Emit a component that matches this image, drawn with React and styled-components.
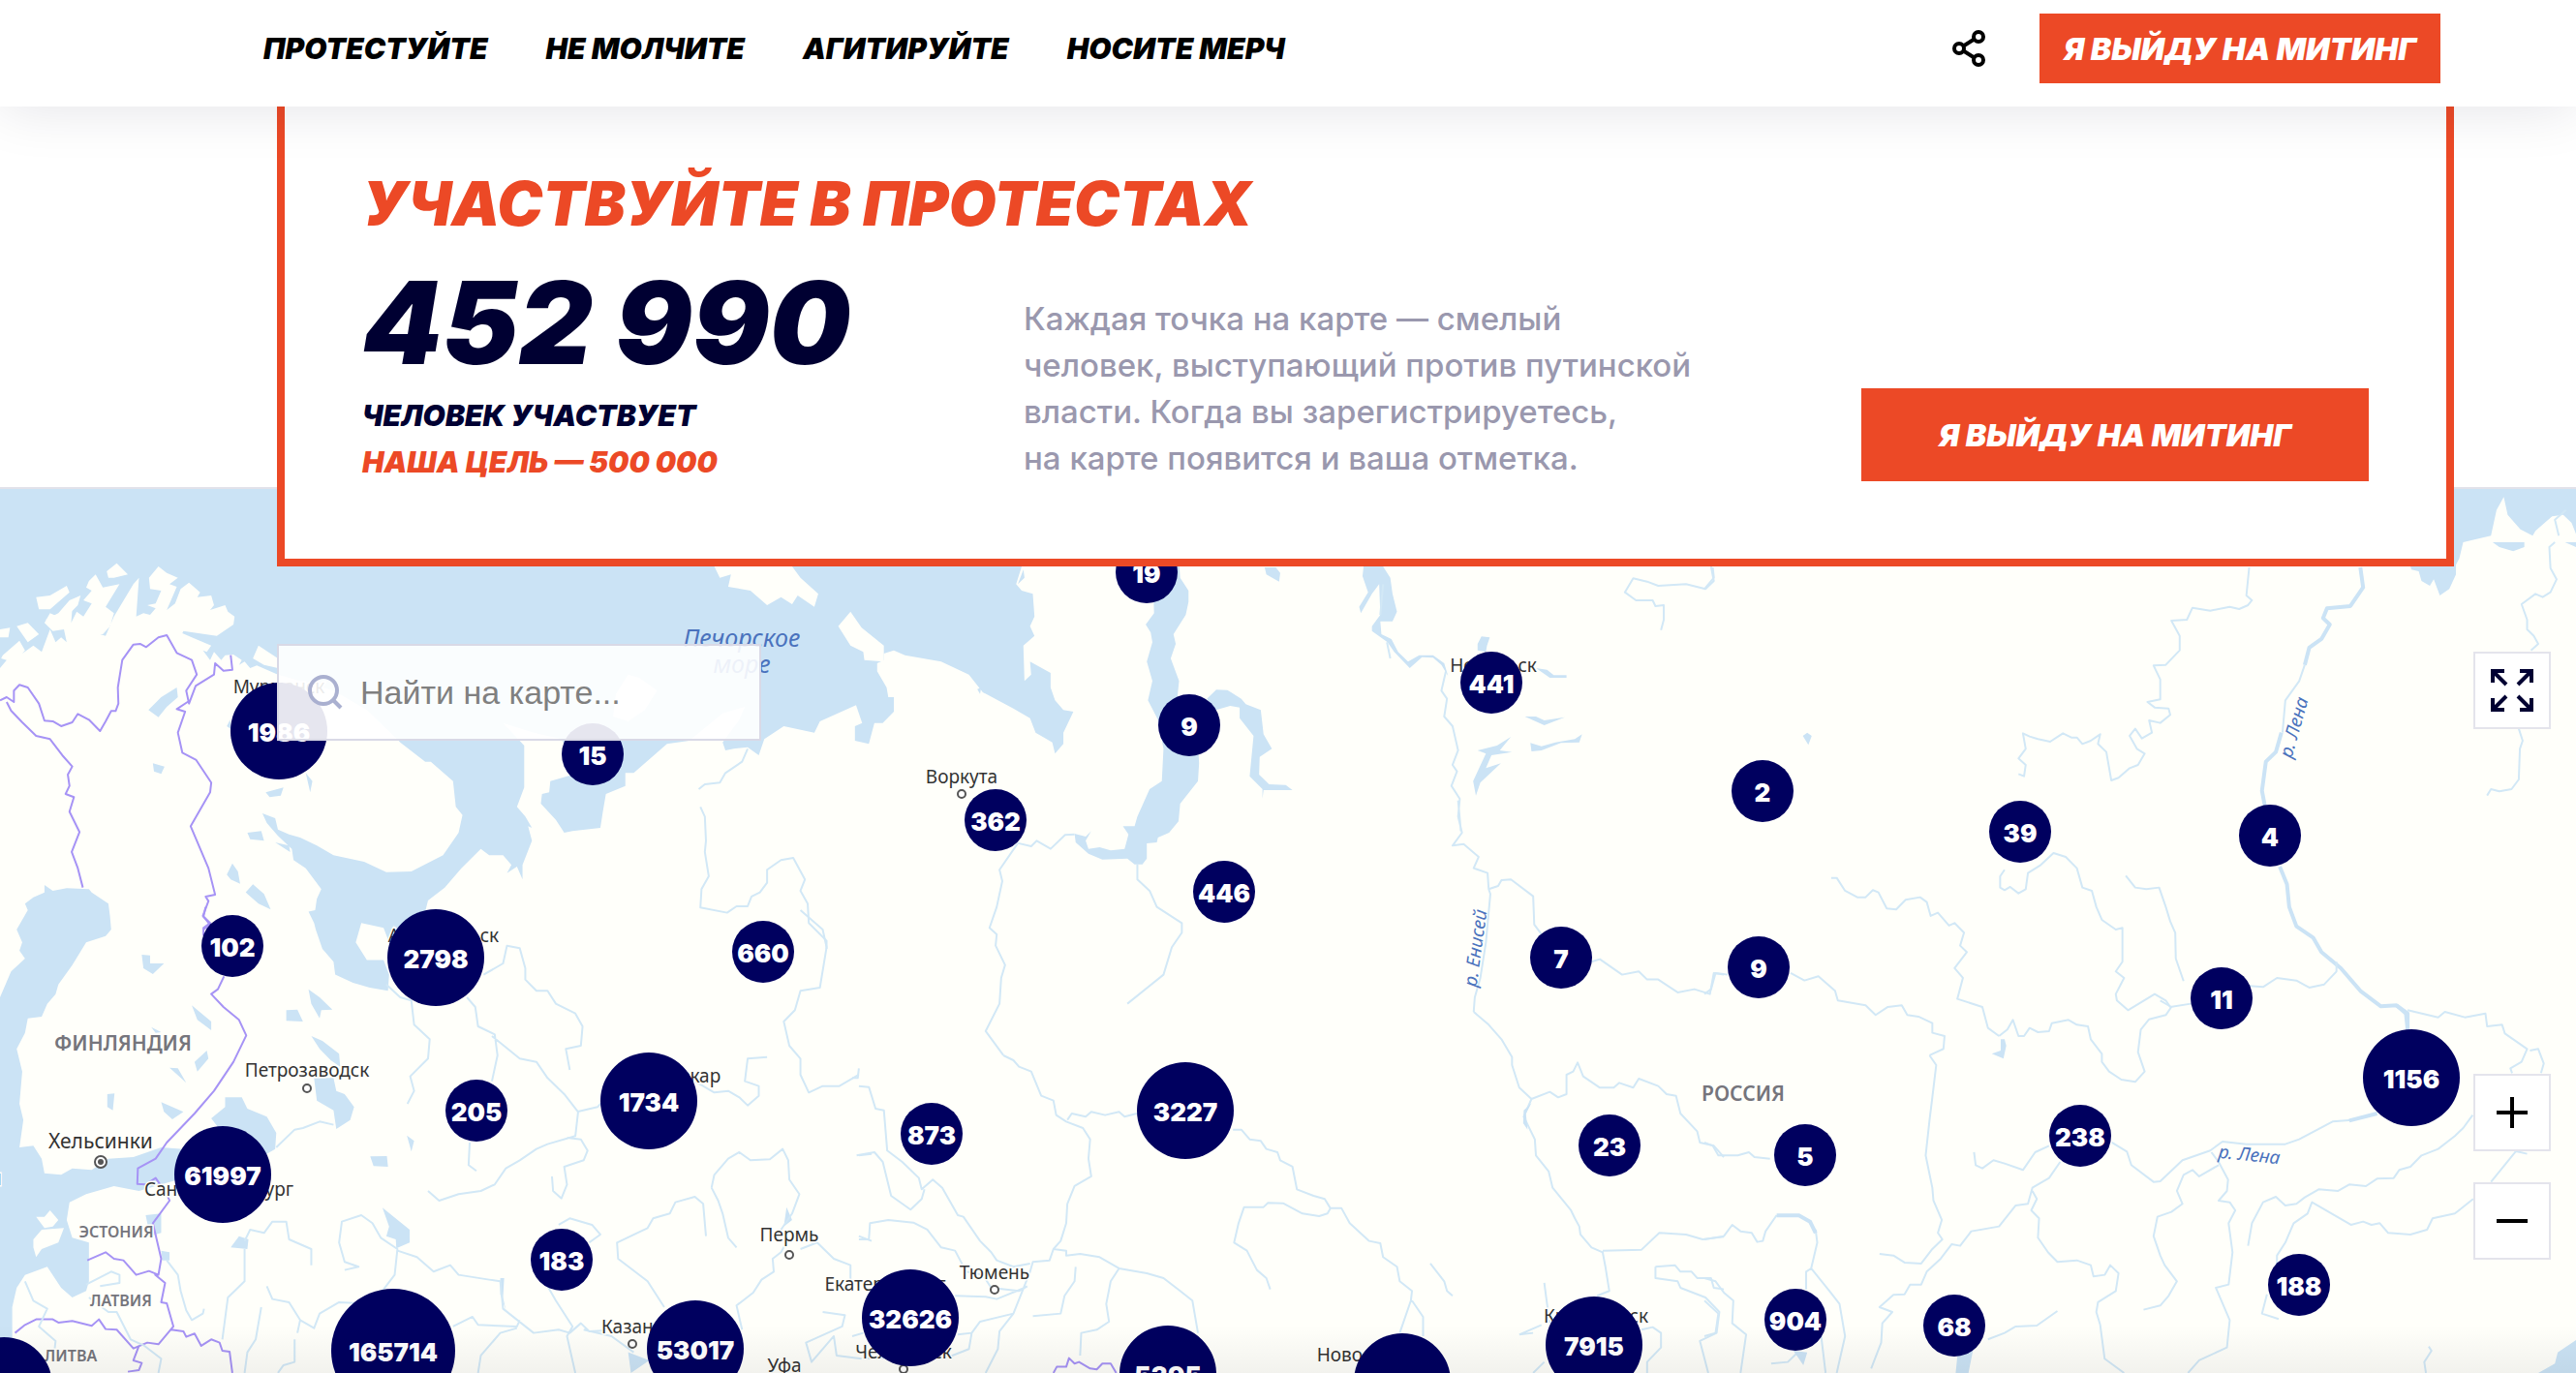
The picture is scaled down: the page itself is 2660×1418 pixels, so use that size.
import React, { useState } from "react";
import styled, { createGlobalStyle, css } from "styled-components";

const GlobalStyle = createGlobalStyle`
  * {
    box-sizing: border-box;
  }

  body {
    margin: 0;
    background: #ffffff;
    font-family: "Inter", "Liberation Sans", sans-serif;
  }
`;

const Page = styled.div`
  min-height: 100vh;
  display: flex;
  flex-direction: column;
`;

const Header = styled.header`
  position: sticky;
  top: 0;
  z-index: 3;
  height: 110px;
  padding: 0 140px 10px 272px;
  display: flex;
  align-items: center;
  justify-content: space-between;
  background: #ffffff;
  box-shadow: 0 0 60px rgba(0, 0, 50, 0.12);
`;

const Nav = styled.nav`
  display: flex;
  gap: 60px;
`;

const NavLink = styled.a`
  font-size: 30px;
  font-weight: 900;
  font-style: italic;
  line-height: 40px;
  color: #000000;
  text-decoration: none;
  white-space: nowrap;
`;

const HeaderActions = styled.div`
  display: flex;
  align-items: center;
  gap: 56px;
`;

const ShareButton = styled.button`
  display: flex;
  padding: 0;
  border: none;
  background: none;
  cursor: pointer;
`;

const ActionButton = styled.button`
  height: ${(props) => (props.$large ? "96px" : "72px")};
  width: ${(props) => (props.$large ? "524px" : "414px")};
  padding: 0;
  border: none;
  background: #ec4926;
  color: #ffffff;
  font-family: inherit;
  font-size: 32px;
  font-weight: 900;
  font-style: italic;
  white-space: nowrap;
  cursor: pointer;
`;

const Card = styled.section`
  position: relative;
  z-index: 2;
  margin: 0 126px -82px 286px;
  padding: 60px 80px 80px;
  border: 8px solid #ec4926;
  border-top: none;
  background: #ffffff;
`;

const Title = styled.h1`
  margin: 0 0 11px;
  font-size: 63px;
  font-weight: 900;
  font-style: italic;
  line-height: 80px;
  color: #ec4926;
`;

const CardRow = styled.div`
  display: grid;
  grid-template-columns: 683px 1fr auto;
  align-items: end;
`;

const Stats = styled.div`
  margin-bottom: -4px;
`;

const Counter = styled.div`
  font-size: 118px;
  font-weight: 900;
  font-style: italic;
  line-height: 144px;
  color: #000032;
  white-space: nowrap;
`;

const CounterNote = styled.div`
  font-size: 30px;
  font-weight: 900;
  font-style: italic;
  line-height: 48px;
  color: ${(props) => (props.$accent ? "#ec4926" : "#000032")};
`;

const About = styled.p`
  margin: 0;
  font-size: 33px;
  font-weight: 500;
  line-height: 48px;
  color: #9a98ae;
`;

const Map = styled.main`
  position: relative;
  flex: 1;
  min-height: 800px;
  overflow: hidden;
  border-top: 2px solid #e2e2ea;
  background: #fffffa;

  &::after {
    content: "";
    position: absolute;
    inset: auto 0 0 0;
    height: 50px;
    background: linear-gradient(rgba(0, 0, 0, 0), rgba(0, 0, 0, 0.05));
    pointer-events: none;
  }
`;

const MapDrawing = styled.svg`
  position: absolute;
  top: 0;
  left: 0;
  font-family: "Noto Sans", "Open Sans", sans-serif;

  path {
    vector-effect: non-scaling-stroke;
  }

  .water {
    fill: #cbe3f5;
  }

  .land {
    fill: #fffffa;
  }

  .river {
    fill: none;
    stroke: #d2e8f6;
    stroke-width: 2;
    stroke-linejoin: round;
  }

  .wide {
    stroke: #cbe3f5;
    stroke-width: 4;
  }

  .border {
    fill: none;
    stroke: #a693f5;
    stroke-width: 2;
    stroke-linejoin: round;
  }
`;

const labelKinds = {
  city: css`
    font-size: 19px;
    fill: #333333;
  `,
  capital: css`
    font-size: 21px;
    fill: #333333;
  `,
  country: css`
    font-size: 21px;
    font-weight: 600;
    fill: #75757c;
  `,
  small: css`
    font-size: 16px;
    font-weight: 600;
    fill: #75757c;
  `,
  sea: css`
    font-size: 25px;
    font-style: italic;
    fill: #4a72bd;
  `,
  river: css`
    font-size: 19px;
    font-style: italic;
    fill: #4a72bd;
  `,
};

const MapLabel = styled.text`
  text-anchor: middle;
  paint-order: stroke;
  stroke: ${(props) =>
    props.$kind === "sea" || props.$kind === "river" ? "none" : "#fffffa"};
  stroke-width: 3px;
  ${(props) => labelKinds[props.$kind]}
`;

const Pin = styled.button`
  position: absolute;
  width: ${(props) => props.$size}px;
  height: ${(props) => props.$size}px;
  padding: 4px 0 0;
  border: none;
  border-radius: 50%;
  transform: translate(-50%, -50%);
  background: #00005f;
  color: #ffffff;
  font-family: inherit;
  font-size: 26px;
  font-weight: 900;
  line-height: 30px;
  text-align: center;
  cursor: pointer;
`;

const Search = styled.label`
  position: absolute;
  top: 160px;
  left: 286px;
  z-index: 1;
  display: flex;
  align-items: center;
  gap: 18px;
  width: 500px;
  height: 100px;
  padding: 0 30px;
  border: 2px solid #d9d9e6;
  background: rgba(255, 255, 255, 0.9);
`;

const SearchInput = styled.input`
  flex: 1;
  min-width: 0;
  padding: 0;
  border: none;
  outline: none;
  background: none;
  font-family: "Liberation Sans", Arial, sans-serif;
  font-size: 34px;
  color: #000032;

  &::placeholder {
    color: #808080;
    opacity: 1;
  }
`;

const Controls = styled.div`
  position: absolute;
  top: 168px;
  right: 26px;
  z-index: 1;
  display: grid;
  gap: 32px;
`;

const ControlButton = styled.button`
  display: flex;
  align-items: center;
  justify-content: center;
  width: 80px;
  height: 80px;
  padding: 0;
  border: 2px solid #e4e4ec;
  background: #ffffff;
  cursor: pointer;

  &:first-child {
    margin-bottom: 324px;
  }
`;

const navItems = ["ПРОТЕСТУЙТЕ", "НЕ МОЛЧИТЕ", "АГИТИРУЙТЕ", "НОСИТЕ МЕРЧ"];

const SMALL = 64;
const MEDIUM = 100;
const LARGE = 128;

const pins = [
  [1184, 86, "19", SMALL],
  [1540, 200, "441", SMALL],
  [1228, 244, "9", SMALL],
  [288, 250, "1986", MEDIUM],
  [612, 274, "15", SMALL],
  [1820, 312, "2", SMALL],
  [1028, 342, "362", SMALL],
  [2086, 354, "39", SMALL],
  [2344, 358, "4", SMALL],
  [1264, 416, "446", SMALL],
  [240, 472, "102", SMALL],
  [788, 478, "660", SMALL],
  [450, 484, "2798", MEDIUM],
  [1612, 484, "7", SMALL],
  [1816, 494, "9", SMALL],
  [2294, 526, "11", SMALL],
  [2490, 608, "1156", MEDIUM],
  [670, 632, "1734", MEDIUM],
  [492, 642, "205", SMALL],
  [1224, 642, "3227", MEDIUM],
  [962, 666, "873", SMALL],
  [2148, 668, "238", SMALL],
  [1662, 678, "23", SMALL],
  [1864, 688, "5", SMALL],
  [230, 708, "61997", MEDIUM],
  [580, 796, "183", SMALL],
  [2374, 822, "188", SMALL],
  [940, 856, "32626", MEDIUM],
  [1854, 858, "904", SMALL],
  [2018, 864, "68", SMALL],
  [1646, 884, "7915", MEDIUM],
  [718, 888, "53017", MEDIUM],
  [406, 890, "165714", LARGE],
  [1206, 914, "5395", MEDIUM],
  [1448, 922, "", MEDIUM],
  [4, 926, "", MEDIUM],
];

const labels = [
  [766, 163, "Печорское", "sea"],
  [766, 190, "море", "sea"],
  [288, 211, "Мурманск", "city"],
  [1542, 189, "Норильск", "city"],
  [993, 304, "Воркута", "city"],
  [458, 468, "Архангельск", "city"],
  [127, 580, "ФИНЛЯНДИЯ", "country"],
  [317, 607, "Петрозаводск", "city"],
  [693, 613, "Сыктывкар", "city"],
  [1800, 632, "РОССИЯ", "country"],
  [104, 681, "Хельсинки", "capital"],
  [-52, 719, "Стокгольм", "capital"],
  [226, 730, "Санкт-Петербург", "city"],
  [120, 773, "ЭСТОНИЯ", "small"],
  [815, 777, "Пермь", "city"],
  [1027, 816, "Тюмень", "city"],
  [914, 828, "Екатеринбург", "city"],
  [125, 844, "ЛАТВИЯ", "small"],
  [1648, 861, "Красноярск", "city"],
  [653, 872, "Казань", "city"],
  [933, 898, "Челябинск", "city"],
  [73, 901, "ЛИТВА", "small"],
  [1421, 901, "Новосибирск", "city"],
  [810, 912, "Уфа", "city"],
];

const riverLabels = [
  [1530, 475, "р. Енисей", -82],
  [2375, 248, "р. Лена", -74],
  [2322, 694, "р. Лена", 6],
];

const towns = [
  [993, 315],
  [317, 619],
  [815, 791],
  [1027, 827],
  [653, 883],
  [933, 909],
];

// Each sheet of the map has its own grid
const sheets = [
  {
    // Barents and Kara seas, Kola peninsula
    transform: "translate(0 -5) scale(.574 .3333)",
    shapes: [
      ["water", "M0 0L0 570 12 545 2 540 5 530 35 485 45 515 40 525 60 500 75 520 90 450 100 490 110 475 120 490 115 450 95 455 80 430 90 400 110 415 130 385 128 430 138 395 150 410 165 370 150 360 165 330 155 320 160 300 172 280 185 320 200 315 215 310 190 380 205 400 198 440 185 465 180 465 190 470 205 410 240 310 250 290 245 410 258 400 270 405 280 385 265 375 280 370 290 330 270 325 268 290 285 255 300 275 320 290 305 310 318 318 310 350 300 390 315 370 325 325 340 305 360 335 355 350 380 345 385 375 378 390 405 375 410 395 422 410 420 435 390 470 330 455 328 462 345 475 380 500 372 520 365 515 378 545 385 520 398 545 405 530 420 528 435 545 430 560 440 550 450 570 462 562 480 575 500 590 600 640 660 700 720 800 765 860 775 860 815 920 820 1000 832 1025 825 1080 797 1150 740 1200 695 1202 655 1170 600 1150 570 1120 540 1095 520 1085 500 1070 495 1035 472 1020 480 1050 500 1090 525 1130 528 1165 550 1190 578 1255 570 1285 567 1320 555 1325 565 1360 568 1380 580 1440 600 1480 603 1520 635 1545 665 1560 698 1570 700 1520 690 1475 660 1475 640 1420 650 1360 690 1375 700 1420 760 1360 770 1290 800 1250 830 1190 865 1130 880 1150 905 1150 920 1180 912 1205 930 1185 940 1225 940 1180 957 1105 950 1060 957 1065 945 1030 930 1000 943 940 943 810 905 740 960 770 1010 790 1030 850 1050 890 990 920 988 955 975 960 973 990 1000 1040 1015 1080 1030 1075 1080 1065 1085 1010 1090 960 1125 935 1125 895 1140 895 1200 805 1240 795 1265 760 1300 710 1340 690 1330 730 1300 800 1305 825 1320 820 1345 815 1365 840 1375 790 1410 750 1465 770 1475 735 1540 685 1551 740 1538 750 1538 795 1563 805 1573 740 1588 740 1608 705 1608 660 1598 660 1595 630 1578 580 1578 555 1590 545 1590 525 1608 515 1628 530 1693 550 1743 590 1768 645 1823 695 1853 725 1863 770 1893 800 1898 835 1913 805 1913 770 1931 705 1913 700 1898 670 1890 630 1890 585 1853 550 1855 590 1843 610 1841 500 1861 470 1853 440 1861 410 1858 340 1838 330 1828 310 1838 255 1838 0Z"],
      ["land", "M1285 255L1425 255 1440 290 1472 340 1465 380 1435 345 1425 372 1405 350 1380 375 1350 330 1310 318 1315 280 1295 290ZM1530 395L1550 445 1590 500 1590 550 1555 545 1553 520 1530 500 1508 440ZM65 350L90 345 120 315 125 335 90 388 70 388ZM82 420L105 400 125 360 145 345 140 375 120 410 100 430ZM195 290L192 270 210 245 230 280 205 290ZM0 450L18 445 15 475 0 475ZM1103 720L1108 650 1130 590 1150 600 1182 640 1160 700 1130 735ZM455 540L465 500 500 540 500 570 475 560ZM30 440L50 430 70 465 50 490Z"],
      ["water", "M267 700L290 660 318 630 320 660 300 690 285 722ZM275 865L296 875 290 898 277 890ZM445 1080L470 1075 475 1105 450 1100ZM408 1210L418 1175 428 1200 432 1238 415 1225ZM442 1265L455 1240 475 1270 487 1318 465 1300ZM478 955L510 940 505 965 485 970ZM550 895L562 920 558 955ZM495 1110L520 1120 522 1140ZM408 750L414 730 416 760Z"],
      ["border", "M0 670L12 660 25 675 25 640 35 622 50 630 70 680 80 733 95 735 110 750 130 738 140 712 160 730 180 765 190 735 200 703 208 703 213 680 212 630 220 545 240 497 252 495 263 505 285 475 300 468 318 523 345 545 354 590 335 640 340 680 352 625 385 590 387 555 402 578 418 575 415 530M340 672L318 697 333 705 320 770 328 832 353 855 380 925 378 955 343 1060 375 1190 387 1272 370 1278 375 1292 365 1338 378 1360 366 1375 366 1400M12 675L20 702 40 738 65 780 90 790 112 840 130 875 122 900 125 935 118 960 133 970 125 1015 143 1078 129 1140 140 1190 149 1250"],
      ["river", "M1345 820L1335 860 1305 895 1295 925 1268 930 1257 945M1260 1000L1268 1030 1270 1105 1268 1140 1275 1215 1262 1255 1260 1312 1308 1328 1325 1308 1345 1308 1352 1278 1367 1265 1380 1235 1380 1195 1405 1165 1427 1158 1448 1225 1440 1260 1453 1300 1455 1360 1487 1415 1487 1440"],
    ],
  },
  {
    // Baltic, north-west
    transform: "translate(0 435) scale(.574 .3333)",
    shapes: [
      ["water", "M50 0L45 -20 60 -40 80 -55 80 -78 95 -60 120 -68 160 -65 165 -55 195 -20 198 20 200 60 190 80 155 100 130 170 105 230 100 260 85 290 75 330 50 335 45 380 30 430 40 500 35 600 42 650 35 735 60 730 75 770 80 815 110 820 130 800 165 805 195 770 240 765 290 735 330 740 330 830 290 850 250 870 205 855 155 880 125 905 120 960 130 1015 160 1030 160 1150 155 1180 130 1200 110 1170 85 1105 45 1130 30 1170 22 1230 22 1434 0 1434 0 270 20 190 45 150 35 125 40 100 30 60Z"],
      ["land", "M65 950L80 950 90 930 105 960 95 980 80 985ZM60 1020L75 990 115 985 105 1030 75 1050 65 1075 60 1045Z"],
      ["water", "M405 580L435 580 445 615 480 640 497 690 495 740 470 765 440 760 400 690 380 645 405 610ZM565 520L600 520 605 560 620 570 637 610 630 650 605 678 600 620 570 590ZM560 390L580 405 610 445 612 485 595 465 575 430ZM515 310L535 308 545 345 515 343ZM555 245L575 270 598 308 578 310 575 335 560 290ZM345 295L380 345 380 372 355 340ZM305 488L320 490 335 535ZM290 595L330 625 310 648 295 625ZM193 570L206 568 203 620 193 610ZM262 945L290 940 290 1000 270 1010ZM666 763L696 762 698 795 672 793ZM732 698L745 715 740 748ZM688 922L737 990 737 1030 713 1048 712 1020 695 1010 700 980ZM415 1045L430 1010 447 1020 445 1050ZM255 138L270 140 270 165 295 165 275 198 258 180ZM290 1055L305 1060 305 1085 292 1085ZM350 470L372 435 375 460 355 500ZM272 362L290 378 280 380ZM900 1140L907 1140 905 1200 910 1240 900 1190ZM1415 920L1425 960 1410 980ZM1130 1370L1168 1395 1135 1434Z"],
      ["border", "M370 -10L366 20 378 45 366 60M403 205L392 245 380 260 402 300 430 340 443 388 420 470 385 560 350 630 300 720 280 770 248 800 247 848 262 850 280 830 300 880 305 900 275 970 290 1080 285 1130 268 1118 245 1130 222 1085 205 1080 190 1060 157 1085M278 1128L297 1155 290 1215 300 1218 312 1290 285 1345 265 1340 240 1358 210 1300 190 1298 178 1268 165 1288 130 1273 105 1278 95 1268 65 1268 45 1285 27 1310M308 1300L330 1305 335 1322 350 1312 362 1350 380 1330 395 1340 400 1365 413 1368 418 1434M250 1350L240 1395 255 1403 250 1425 230 1430"],
      ["river", "M695 230L720 270 740 280 745 355 773 400 770 460 738 515 745 560 733 600M840 270L855 300 860 360 890 385 895 450 885 530M885 390L935 460 965 470 985 520 1015 570 1040 625 1035 700 985 725 965 740 935 775 910 800 890 850 865 870 825 880 790 900 770 870M870 200L890 180 905 165 912 110 935 118 945 180 945 215 965 250 985 250 1000 290 1035 320 1048 360 1045 420 1018 430 1025 495M1038 625L1075 610 1085 590M845 720L843 790 857 808M1020 705L1045 710 1057 745 1050 775 1015 795 1020 850 1010 893 995 870 993 825M497 735L530 680 545 675 575 655 600 665M1440 0L1480 60 1487 115 1475 240 1440 250 1430 310 1410 345 1420 420 1440 460 1440 510 1455 565 1480 545 1510 545 1545 510M1380 455L1345 460 1340 530 1365 545 1365 575 1345 605 1330 580 1310 560 1285 565 1250 530M1280 860L1285 820 1310 770 1330 750 1350 775 1385 772 1408 740 1418 775 1420 835 1438 880 1425 940 1405 990 1415 1030 1405 1060 1390 1080 1392 1120 1370 1145 1355 1185 1325 1225 1335 1300M1325 1045L1310 1015 1300 940 1292 900 1280 860M1270 1010L1265 910 1250 888 1215 905 1205 940 1175 955 1165 985 1110 1030 1112 1080 1165 1150 1195 1230M715 1055L750 1075 780 1120 810 1100 825 1130 880 1145 900 1150 905 1235 960 1310 1005 1300 1025 1310 1045 1280 1060 1305 1085 1303M540 1270L565 1295 575 1250 610 1215 670 1220 710 1130 715 1050 685 1015 670 970 650 945 615 965 610 1030 620 1090 645 1105 620 1115M440 1025L450 990 475 1000 490 965 515 965 520 1020 560 1050 560 1100M440 1050L440 1150 410 1200 400 1330M470 1230L460 1330 445 1370 440 1434M480 1165L490 1205 520 1215 540 1270 535 1310M1005 975L1025 955 1065 975 1080 1005 1060 1030M980 1150L1000 1210 1030 1290 1020 1320 1035 1434M815 1290L850 1260 860 1285 930 1290 935 1270M860 1434L865 1380 900 1310 930 1295M45 1150L60 1210 85 1235 70 1290 100 1335 98 1365M155 1160L200 1120 215 1130 215 1155 180 1165M160 1200L195 1245 210 1245 235 1330 260 1350 290 1390 285 1434M300 1085L320 1130 325 1180 335 1240 345 1270 365 1250 367 1235M1050 1300L1100 1320 1140 1370M1440 1050L1470 1030 1500 1080 1530 1100 1530 1150M1545 760L1568 755M1545 1010L1568 1025M500 1434L510 1410 530 1400 530 1330M1480 1245L1520 1255 1515 1290 1450 1340 1460 1400 1500 1320 1505 1380 1550 1390M735 1434L760 1395 810 1400"],
    ],
  },
  {
    // Gulf of Ob, lower Yenisei
    transform: "translate(880 55) scale(.574 .3333)",
    shapes: [
      ["water", "M540 60L588 60 590 110 605 150 605 185 600 225 578 285 582 315 573 360 588 430 585 480 620 560 624 685 622 740 590 810 587 865 570 900 550 915 548 930 530 933 530 980 522 998 508 998 495 980 450 983 425 965 402 930 400 903 420 912 430 895 420 925 425 950 445 945 465 955 490 950 497 905 487 880 508 880 513 850 522 815 535 765 557 740 560 640 550 550 532 490 540 430 530 370 540 310 537 280 528 255 543 220ZM638 485L655 457 675 458 700 485 708 502 735 520 740 595 755 640 733 665 732 720 750 750 780 752 792 768 740 768 738 795 738 765 715 725 722 600 697 545 697 512 680 507 650 522ZM920 75L955 75 968 110 972 160 980 215 972 245 950 245 952 285 970 300 982 340 1000 370 1020 350 1045 350 1065 375 1072 415 1060 380 1045 358 1025 356 1003 390 975 340 963 310 935 275 935 260 950 225 948 130 935 160 915 220 912 200 928 155 918 105ZM742 78L762 78 770 95 768 122 745 100ZM1132 292L1147 295 1142 320 1140 340 1125 335 1125 315ZM1210 540L1230 540 1245 552 1282 542 1245 567ZM1220 622L1240 632 1265 620 1300 610 1313 595 1308 620 1275 622 1240 645 1222 648ZM1185 603L1165 645 1187 650 1150 660 1140 700 1167 685 1130 745 1122 785 1117 740 1140 655 1125 645 1160 630ZM1230 390L1250 395 1262 412 1285 412 1285 420 1255 420ZM225 455L232 450 230 470ZM298 130L308 85 310 110Z"],
      ["river", "M962 310L968 360M1068 400L1060 460 1070 485 1065 540 1080 570 1090 645 1080 690 1088 710 1078 755 1093 795 1090 850 1097 900 1080 940 1100 935 1127 975 1118 1010 1143 1025 1145 1075 1148 1090 1140 1240 1130 1350 1120 1410 1118 1455M1090 800L1095 895M1145 1075L1162 1065 1168 1047 1185 1045 1225 1097 1227 1185 1240 1215M297 932L322 942 332 925 357 950 383 907 400 905M297 935L265 1015 270 1050 260 1130 247 1195 260 1215 258 1250 275 1310 268 1350 265 1430 240 1515 272 1590M513 998L513 1045 535 1080 548 1130 593 1180 593 1210 575 1255 560 1340 495 1430M1545 75L1550 120 1535 145 1500 130 1450 135 1430 122 1405 112 1390 155 1410 180 1440 180 1445 198 1460 195 1460 240 1455 272M950 225L955 130M1330 1300L1345 1292 1385 1340 1415 1330 1430 1355 1450 1355 1485 1395 1515 1385 1543 1400 1550 1335 1568 1340"],
    ],
  },
  {
    // West Siberia
    transform: "translate(880 475) scale(.574 .3333)",
    shapes: [
      ["river", "M272 330L290 345 300 365 322 380 340 455 362 470 367 515 385 535 415 555 428 590 425 650 430 705 400 735 387 790 385 850 375 905 362 930 355 965 325 970 320 1000 290 1130 265 1185 262 1240 240 1314M387 530L395 510 420 520 430 505 455 515 480 505 490 520 512 510M685 560L700 560 715 590 735 595 745 620 765 630 770 655 792 675 800 745 830 765 850 775 860 803 880 803 895 850 930 905 950 912 955 955 980 985 985 1030 1007 1060 1005 1090 985 1190M1007 1090L1027 1140 1027 1200M860 805L855 820 840 828 810 820 775 788 748 787 740 800 705 800 695 850 687 910 710 935 728 995 745 1020 752 1055M362 930L385 935 385 950 410 945 445 955 480 990 530 1005 560 1020 590 1060 612 1090 622 1190M480 990L465 1030 457 1100 462 1155 440 1180 412 1190 410 1260M402 985L400 1030 382 1075 375 1130 325 1138M12 425L30 428 42 495 57 500 63 625 90 660 120 710 125 745 145 715 162 740 190 825 200 830 230 905 250 940 260 965 290 985 320 975M8 640L40 630 55 660 70 765 105 808 125 775 130 745M12 900L30 900 32 850 65 840 110 848 135 870 160 925 185 935 205 1000 235 1010 250 1050 300 1060 315 1045M185 1075L240 1078 260 1085 310 1050M0 400L10 400 12 370M290 1130L230 1155 215 1190 190 1195M1118 195L1145 235 1168 280 1187 335 1187 360 1200 430 1222 465 1208 520 1228 590 1230 640 1253 690 1260 740 1293 810 1300 835 1308 860 1310 885 1330 925 1350 940 1355 985 1362 1060 1340 1075M1222 465L1255 443 1270 460 1285 450 1285 390 1297 380 1305 352 1315 395 1345 430 1370 430 1380 415 1405 430 1415 402 1450 425 1465 450 1482 455 1490 510 1520 565 1525 600 1550 610 1568 645M1350 935L1420 932 1452 880 1500 885 1530 900 1568 892M1040 975L1065 1030 1070 1060 1080 1075M1245 1035L1250 1100 1255 1160M1445 985L1480 980 1490 1000 1510 1000 1520 1020 1545 1020 1550 1050 1568 1055M1445 985L1445 1020 1485 1030 1490 1050 1535 1080 1560 1125 1555 1190 1525 1215 1540 1314M1420 1180L1440 1172 1455 1190 1455 1235 1430 1280 1430 1314M1200 1195L1240 1165M1200 1195L1225 1190M1245 1280L1225 1314M20 1190L0 1200M215 1190L210 1240 180 1260 20 1270"],
      ["water", "M1222 478L1208 500 1207 540 1215 560 1212 510Z"],
      ["border", "M362 1314L368 1295 385 1295 390 1268 400 1285 408 1280 428 1300 440 1303 450 1285 465 1285 475 1314"],
    ],
  },
  {
    // Laptev sea and lower Lena
    transform: "translate(1760 55) scale(.574 .3333)",
    shapes: [
      ["water", "M1345 -180L1568 -180 1568 -25 1560 -60 1545 -85 1525 -80 1495 -35 1490 -20 1468 -40 1445 -85 1438 -140 1425 -100 1415 -20 1365 0 1358 50 1352 70 1352 100 1340 145 1323 165 1312 115 1305 135 1290 120 1285 90 1272 85 1270 75 1348 75ZM1418 0L1475 0 1475 15 1455 28 1430 15ZM177 600L185 590 193 600 187 628ZM1548 0L1568 15 1568 0Z"],
      ["river wide", "M1180 78L1185 140 1162 198 1120 205 1113 235 1125 255 1110 300 1088 327 1080 380M1038 590L1028 650 1010 680 1003 770 1008 815M1035 1005L1048 1060 1052 1130 1065 1190 1095 1225 1110 1270 1145 1320 1180 1390 1217 1438 1245 1435 1265 1460 1265 1510"],
      ["river", "M1080 380L1070 430 1045 490 1040 590M980 78L975 165 985 180 978 195 962 207 945 200 910 212 878 203 868 240 840 243 855 290 855 335 830 380 808 382 820 425 820 487 797 495 810 512 835 515 838 535 820 560 800 552 805 590 787 608 775 578 765 600 778 640 792 655 780 690 765 700 745 730 732 738 723 650 708 625 712 595 695 615 680 625 670 605 660 605 645 592 622 618 600 610 585 602 573 592 578 640 565 670 578 690 575 725 565 718M540 1015L532 1035 532 1070 540 1078 550 1068 565 1088 578 1075 582 1025 605 1000 628 963 650 975 670 1010 680 1070 697 1080 705 1130 715 1170 740 1200 752 1195 752 1300 740 1330 755 1350 740 1400 742 1420 762 1450 810 1400 830 1420 838 1440 875 1430M758 1033L775 1070 795 1075 818 1070 830 1130 838 1175 847 1210 848 1290 862 1360M228 1040L238 1040 253 1080 275 1100 290 1100 303 1078 313 1085 328 1135 345 1138 362 1108 388 1100 400 1115 407 1158 420 1148 440 1188 450 1180 467 1210 460 1250 472 1270 450 1320 465 1350 455 1415 500 1440 510 1505 530 1530M1530 0L1520 15 1522 80 1533 115 1522 155 1508 170 1495 160 1470 192 1480 240 1480 270 1492 290 1500 315 1487 335M1465 578L1472 615 1467 640 1465 735 1452 765 1430 772 1415 765 1408 785M1537 -20L1530 -70 1550 -100M15 78L17 110 0 145M0 1400L12 1385 20 1335 42 1340M155 1335L180 1358 205 1345 235 1390 240 1420 290 1435 308 1465 330 1440 355 1435 365 1465 385 1470 410 1490 410 1520 432 1530 430 1570 405 1590"],
    ],
  },
  {
    // East Siberia
    transform: "translate(1760 475) scale(.574 .3333)",
    shapes: [
      ["river", "M405 330L417 360 410 460 405 530 398 640 410 740 412 780 427 840 420 880 428 900 410 930 390 975 360 972 340 950 315 945M530 270L545 250 555 220 565 270 575 270 585 245 600 258 620 255 625 230 655 220 670 235 690 240 695 280 715 325 715 350 728 380 750 405 775 412 792 380 780 320 785 250 800 218 830 205 840 180 820 160M980 115L1005 118 1030 90 1065 98 1088 120 1115 110 1137 70 1137 40M1265 190L1320 212 1332 195 1368 212 1405 200 1408 240 1435 235 1440 262 1480 310 1470 350 1450 370 1453 385M1485 315L1500 310 1510 355 1505 385M1210 510L1165 530 1130 535 1070 590 1045 605 975 605 932 597 910 625 860 655 820 720 808 722 768 670 760 628 733 600M912 630L925 660 942 715 940 750 925 780 945 785 955 810 943 850 950 940 943 1040 920 1050 945 1150 940 1235 890 1275 870 1314M925 670L890 705 878 685 862 700 850 750 860 790 840 815 815 830 808 890 820 950 828 980 850 1030 835 1075 820 1105 790 1118M620 610L595 630 573 685 540 665 520 655 500 680 488 670 485 630M640 660L620 710 590 740 582 790 560 795 530 860 480 875 460 920 445 915 425 960 400 1000 390 1040 370 1040 360 1070 340 1072 315 1110 338 1125 320 1160 318 1220 300 1300M590 750L598 775 588 810 602 835 600 895 618 940 635 970 670 965 695 980 700 1015 720 1010 730 980 745 1005 740 1060 708 1095 705 1125 712 1165 720 1270 755 1314M0 600L15 610 25 640 60 640 80 630 90 645 118 650M0 900L35 890 50 855 65 875 85 880 95 908 105 905 110 875 130 825M200 870L203 910 192 990 183 1000 183 1055M192 990L225 1060 243 1100 253 1200 238 1314M210 1200L218 1314M0 1020L20 1030 35 1065 52 1090 50 1160 75 1195 65 1314M510 1210L540 1190 560 1170 598 1167 635 1122M978 920L985 850 1005 785 1028 768 1045 795 1065 790 1080 770 1105 745 1140 750 1160 730 1190 735 1210 712 1240 710 1250 685 1270 675 1290 640 1320 620 1350 580 1365 555 1382 515M1383 775L1350 820 1310 835 1300 870 1270 885 1230 880 1215 850 1200 855 1185 845 1163 855 1093 785 1085 820 1060 850 1045 910 1030 950 1030 990M1012 1070L1003 1130 1033 1147M1460 627L1415 722M1460 627L1480 635M1303 1232L1308 1245 1295 1280 1298 1314M120 1285L150 1280 165 1255M0 1200L20 1190 25 1130 0 1090"],
      ["river wide", "M1245 175L1262 200 1265 250M1160 532L1210 510M130 826L170 826 190 845 200 880"],
      ["water", "M533 280L540 280 543 300 538 340 517 325 533 315ZM455 1262L483 1245 475 1314 452 1314ZM160 1245L185 1250 178 1290ZM1500 1314L1530 1285 1535 1250 1568 1212 1568 1314Z"],
    ],
  },
];

const ShareIcon = () => (
  <svg width="34" height="38" viewBox="0 0 34 38" fill="none" stroke="#000" strokeWidth="4">
    <circle cx="27" cy="7" r="5" />
    <circle cx="7" cy="19" r="5" />
    <circle cx="27" cy="31" r="5" />
    <path d="M11.500 16.500L22.500 9.500M11.500 21.500L22.500 28.500" />
  </svg>
);

const SearchIcon = () => (
  <svg width="36" height="36" viewBox="0 0 36 36" fill="none" stroke="#aab0d0" strokeWidth="4">
    <circle cx="16" cy="16" r="14" />
    <path d="M26 26L34 34" />
  </svg>
);

const ExpandIcon = () => (
  <svg width="44" height="44" viewBox="0 0 44 44" fill="none" stroke="#000032" strokeWidth="4">
    <path d="M2 14V2H14M2 2L16 16" />
    <path d="M30 2H42V14M42 2L28 16" />
    <path d="M2 30V42H14M2 42L16 28" />
    <path d="M30 42H42V30M42 42L28 28" />
  </svg>
);

const PlusIcon = () => (
  <svg width="32" height="32" viewBox="0 0 32 32" stroke="#000" strokeWidth="4">
    <path d="M0 16H32M16 0V32" />
  </svg>
);

const MinusIcon = () => (
  <svg width="32" height="32" viewBox="0 0 32 32" stroke="#000" strokeWidth="4">
    <path d="M0 16H32" />
  </svg>
);

const MapBackground = () => (
  <MapDrawing width="2660" height="1000" viewBox="0 0 2660 1000">
    {sheets.map((sheet) => (
      <g key={sheet.transform} transform={sheet.transform}>
        {sheet.shapes.map(([kind, d], i) => (
          <path key={i} className={kind} d={d} />
        ))}
      </g>
    ))}
    {towns.map(([x, y]) => (
      <circle key={x} cx={x} cy={y} r="4" fill="#fff" stroke="#555" strokeWidth="2" />
    ))}
    <circle cx="104" cy="695" r="6" fill="#fff" stroke="#555" strokeWidth="2" />
    <circle cx="104" cy="695" r="3" fill="#555" />
    {labels.map(([x, y, text, kind]) => (
      <MapLabel key={text} x={x} y={y} $kind={kind}>
        {text}
      </MapLabel>
    ))}
    {riverLabels.map(([x, y, text, angle]) => (
      <MapLabel key={angle} x={x} y={y} $kind="river" transform={`rotate(${angle} ${x} ${y})`}>
        {text}
      </MapLabel>
    ))}
  </MapDrawing>
);

const App = () => {
  const [query, setQuery] = useState("");

  return (
    <Page>
      <GlobalStyle />
      <Header>
        <Nav>
          {navItems.map((item) => (
            <NavLink key={item} href="#">
              {item}
            </NavLink>
          ))}
        </Nav>
        <HeaderActions>
          <ShareButton type="button" aria-label="Поделиться">
            <ShareIcon />
          </ShareButton>
          <ActionButton type="button">Я ВЫЙДУ НА МИТИНГ</ActionButton>
        </HeaderActions>
      </Header>

      <Card>
        <Title>УЧАСТВУЙТЕ В ПРОТЕСТАХ</Title>
        <CardRow>
          <Stats>
            <Counter>452 990</Counter>
            <CounterNote>ЧЕЛОВЕК УЧАСТВУЕТ</CounterNote>
            <CounterNote $accent>НАША ЦЕЛЬ — 500 000</CounterNote>
          </Stats>
          <About>
            Каждая точка на карте — смелый
            <br />
            человек, выступающий против путинской
            <br />
            власти. Когда вы зарегистрируетесь,
            <br />
            на карте появится и ваша отметка.
          </About>
          <ActionButton type="button" $large>
            Я ВЫЙДУ НА МИТИНГ
          </ActionButton>
        </CardRow>
      </Card>

      <Map>
        <MapBackground />
        {pins.map(([x, y, count, size]) => (
          <Pin key={`${x}-${y}`} type="button" $size={size} style={{ left: x, top: y }}>
            {count}
          </Pin>
        ))}
        <Search>
          <SearchIcon />
          <SearchInput
            type="text"
            aria-label="Найти на карте"
            placeholder="Найти на карте..."
            value={query}
            onChange={(e) => setQuery(e.target.value)}
          />
        </Search>
        <Controls>
          <ControlButton type="button" aria-label="На весь экран">
            <ExpandIcon />
          </ControlButton>
          <ControlButton type="button" aria-label="Приблизить">
            <PlusIcon />
          </ControlButton>
          <ControlButton type="button" aria-label="Отдалить">
            <MinusIcon />
          </ControlButton>
        </Controls>
      </Map>
    </Page>
  );
};

export default App;
